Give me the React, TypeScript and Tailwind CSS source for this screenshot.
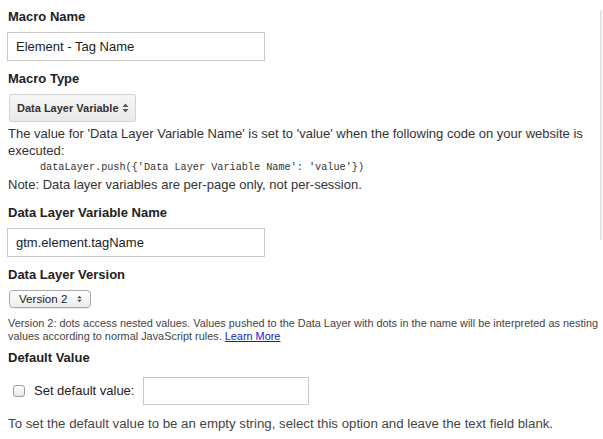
import React from "react";

const label = "block text-[13px] leading-[16px] font-bold text-[#222]";
const field =
  "block h-[29px] w-[258px] -ml-px border border-[#c9c9c9] bg-white px-2 text-[13px] text-[#222] outline-none";

function UpDown({ className }: { className?: string }) {
  return (
    <svg width="7" height="10" viewBox="0 0 7 10" className={className}>
      <path d="M3.5 0.5 L6.5 4 H0.5 Z" fill="currentColor" />
      <path d="M3.5 9.5 L6.5 6 H0.5 Z" fill="currentColor" />
    </svg>
  );
}

export default function App() {
  return (
    <div
      className="flex w-[603px] h-[439px] overflow-hidden bg-white text-[#333]"
      style={{ fontFamily: '"Liberation Sans", Arial, sans-serif' }}
    >
      {/* Form */}
      <div className="flex-1 min-w-0 pl-2 pt-[9px]">
        <span className={label}>Macro Name</span>
        <input className={`${field} mt-[7px]`} defaultValue="Element - Tag Name" />

        <span className={`${label} mt-[10px]`}>Macro Type</span>
        <div className="mt-[7px] ml-px flex h-[28px] w-[127px] items-center justify-between rounded-[2px] border border-[#d3d3d3] bg-gradient-to-b from-[#f6f6f6] to-[#e9e9e9] pl-[7px] pr-[6px] text-[11px] font-bold text-[#333]">
          <span>Data Layer Variable</span>
          <UpDown className="text-[#555]" />
        </div>

        <div className="mt-[3px] whitespace-nowrap text-[13px] leading-[17px] text-[#333]">
          <div>The value for 'Data Layer Variable Name' is set to 'value' when the following code on your website is</div>
          <div>executed:</div>
          <div
            className="pl-8 text-[10.2px]"
            style={{ fontFamily: '"Liberation Mono", "Courier New", monospace' }}
          >
            dataLayer.push({"{"}'Data Layer Variable Name': 'value'{"}"})
          </div>
          <div>Note: Data layer variables are per-page only, not per-session.</div>
        </div>

        <span className={`${label} mt-[12px]`}>Data Layer Variable Name</span>
        <input className={`${field} mt-[7px]`} defaultValue="gtm.element.tagName" />

        <span className={`${label} mt-[10px]`}>Data Layer Version</span>
        <div className="mt-[7px] ml-px flex h-[18px] w-[82px] items-center justify-between rounded-[4px] border border-[#a9a9a9] bg-gradient-to-b from-white to-[#ececec] pl-[9px] pr-[8px] text-[11.6px] text-[#222] shadow-[0_1px_1px_rgba(0,0,0,0.08)]">
          <span>Version 2</span>
          <UpDown className="h-[8px] w-[5px] text-[#444]" />
        </div>

        <div className="mt-[9px] whitespace-nowrap text-[10.9px] leading-[13px] text-[#444]">
          <div>
            Version 2: dots access nested values. Values pushed to the Data Layer with dots in the name will be interpreted as nesting
          </div>
          <div>
            values according to normal JavaScript rules.{" "}
            <a href="#" className="text-[#1a1acc] underline">
              Learn More
            </a>
          </div>
        </div>

        <span className={`${label} mt-[7px]`}>Default Value</span>
        <div className="mt-[11px] flex items-center">
          <input
            type="checkbox"
            className="ml-[5px] h-[12px] w-[12px] appearance-none rounded-[3px] border border-[#9d9d9d] bg-gradient-to-b from-white to-[#e6e6e6]"
          />
          <span className="ml-[9px] text-[13px] text-[#222]">Set default value:</span>
          <input className="ml-[9px] h-[28px] w-[166px] border border-[#c9c9c9] bg-white px-2 text-[13px] outline-none" />
        </div>

        <div className="mt-[11px] whitespace-nowrap text-[13.25px] leading-[16px] text-[#444]">
          To set the default value to be an empty string, select this option and leave the text field blank.
        </div>
      </div>

      {/* Right panel edge */}
      <div className="w-[3px] shrink-0">
        <div className="mt-[10px] h-[230px] w-[2px] rounded-t-[2px] bg-[#e2e2e2]" />
      </div>
    </div>
  );
}
